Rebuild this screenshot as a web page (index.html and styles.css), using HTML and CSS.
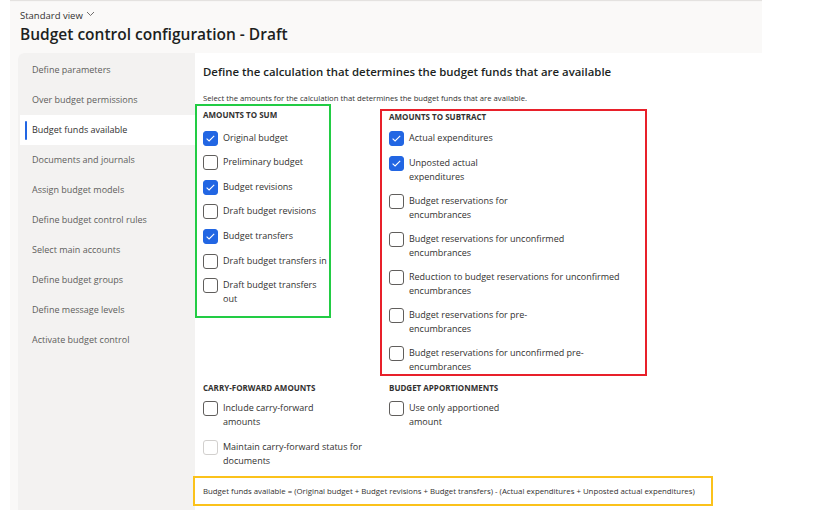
FILE: index.html
```html
<!DOCTYPE html>
<html lang="en">
<head>
    <meta charset="UTF-8">
    <title>Budget control configuration</title>
    <link rel="stylesheet" href="styles.css">
</head>
<body>
<div class="app">
    <div class="header">
        <div class="view-picker">Standard view
            <svg class="chev" width="9" height="6" viewBox="0 0 9 6"><path d="M1 1 L4.5 4.5 L8 1" fill="none" stroke="#605e5c" stroke-width="0.9"/></svg>
        </div>
        <h1 class="page-title">Budget control configuration - Draft</h1>
    </div>

    <div class="card">
        <ul class="nav">
            <li>Define parameters</li>
            <li>Over budget permissions</li>
            <li class="active">Budget funds available</li>
            <li>Documents and journals</li>
            <li>Assign budget models</li>
            <li>Define budget control rules</li>
            <li>Select main accounts</li>
            <li>Define budget groups</li>
            <li>Define message levels</li>
            <li>Activate budget control</li>
        </ul>

        <div class="content">
            <h2 class="content-title">Define the calculation that determines the budget funds that are available</h2>
            <p class="hint">Select the amounts for the calculation that determines the budget funds that are available.</p>

            <div class="groups">
                <div class="group group-sum">
                    <div class="group-title">AMOUNTS TO SUM</div>
                    <div class="check"><span class="box on"></span><span class="label">Original budget</span></div>
                    <div class="check"><span class="box"></span><span class="label">Preliminary budget</span></div>
                    <div class="check"><span class="box on"></span><span class="label">Budget revisions</span></div>
                    <div class="check"><span class="box"></span><span class="label">Draft budget revisions</span></div>
                    <div class="check"><span class="box on"></span><span class="label">Budget transfers</span></div>
                    <div class="check"><span class="box"></span><span class="label">Draft budget transfers in</span></div>
                    <div class="check"><span class="box"></span><span class="label">Draft budget transfers<br>out</span></div>
                </div>

                <div class="group group-sub">
                    <div class="group-title">AMOUNTS TO SUBTRACT</div>
                    <div class="check"><span class="box on"></span><span class="label">Actual expenditures</span></div>
                    <div class="check"><span class="box on"></span><span class="label">Unposted actual<br>expenditures</span></div>
                    <div class="check"><span class="box"></span><span class="label">Budget reservations for<br>encumbrances</span></div>
                    <div class="check"><span class="box"></span><span class="label">Budget reservations for unconfirmed<br>encumbrances</span></div>
                    <div class="check"><span class="box"></span><span class="label">Reduction to budget reservations for unconfirmed<br>encumbrances</span></div>
                    <div class="check"><span class="box"></span><span class="label">Budget reservations for pre-<br>encumbrances</span></div>
                    <div class="check"><span class="box"></span><span class="label">Budget reservations for unconfirmed pre-<br>encumbrances</span></div>
                </div>
            </div>

            <div class="extras">
                <div class="extra extra-carry">
                    <div class="group-title">CARRY-FORWARD AMOUNTS</div>
                    <div class="check"><span class="box"></span><span class="label">Include carry-forward<br>amounts</span></div>
                    <div class="check"><span class="box disabled"></span><span class="label">Maintain carry-forward status for<br>documents</span></div>
                </div>
                <div class="extra">
                    <div class="group-title">BUDGET APPORTIONMENTS</div>
                    <div class="check"><span class="box"></span><span class="label">Use only apportioned<br>amount</span></div>
                </div>
            </div>

            <div class="formula">Budget funds available = (Original budget + Budget revisions + Budget transfers) - (Actual expenditures + Unposted actual expenditures)</div>
        </div>
    </div>
</div>
</body>
</html>
```

FILE: styles.css
```css
html, body {
    margin: 0;
    padding: 0;
    background-color: white;
    font-family: 'Open Sans', 'Noto Sans', sans-serif;
    color: #323130;
}

.app {
    margin-left: 10px;
    width: 752px;
    height: 510px;
    background-color: #faf9f8;
    box-shadow: inset 0 2px 1px -1px #e1dfdd;
    overflow: hidden;
}

.header {
    padding: 9px 0 0 10px;
    height: 44px;
}

.view-picker {
    font-size: 9.5px;
    line-height: 13px;
    color: #323130;
}

.chev {
    margin-left: 1px;
    vertical-align: 2px;
}

.page-title {
    margin: 1px 0 0;
    font-size: 15.5px;
    line-height: 22px;
    font-weight: 600;
    color: #201f1e;
}

.card {
    display: flex;
    margin-left: 8px;
    height: 457px;
    border-top-left-radius: 6px;
    overflow: hidden;
    background-color: white;
}

.nav {
    list-style: none;
    margin: 0;
    padding: 2px 0 0 2px;
    width: 175px;
    background-color: #f3f2f1;
}

.nav li {
    height: 30px;
    line-height: 30px;
    padding-left: 12px;
    font-size: 9px;
    color: #605e5c;
    position: relative;
}

.nav li.active {
    background-color: white;
    color: #323130;
}

.nav li.active::before {
    content: '';
    position: absolute;
    left: 5px;
    top: 6px;
    width: 2px;
    height: 19px;
    background-color: #2266e3;
    border-radius: 1px;
}

.content {
    flex: 1;
    padding: 10px 0 0 8px;
}

.content-title {
    margin: 0;
    font-size: 11.4px;
    line-height: 18px;
    font-weight: 600;
    color: #201f1e;
}

.hint {
    margin: 12px 0 0;
    font-size: 7.7px;
    line-height: 11px;
    color: #323130;
}

.groups {
    display: flex;
    align-items: flex-start;
    margin-left: -8px;
}

.group {
    box-sizing: border-box;
    border: 2px solid;
}

.group-sum {
    width: 136px;
    padding: 3px 0 10px 6px;
    border-color: #22cc44;
}

.group-sub {
    width: 267px;
    margin-top: 5px;
    margin-left: 49px;
    padding: 0 0 0 7px;
    border-color: #e8202a;
}

.group-title {
    font-size: 8px;
    line-height: 12px;
    font-weight: 700;
    color: #323130;
}

.check {
    display: flex;
    align-items: flex-start;
    margin-top: 10px;
}

.group-sum .check {
    margin-top: 9.6px;
}

.group-sub .check:nth-child(2) {
    margin-top: 8px;
}

.box {
    box-sizing: border-box;
    flex: none;
    width: 15px;
    height: 15px;
    border: 1px solid #605e5c;
    border-radius: 3px;
    background-color: white;
    margin-right: 5px;
}

.box.on {
    border-color: #2266e3;
    background-color: #2266e3;
    background-image: url("data:image/svg+xml,%3Csvg xmlns='http://www.w3.org/2000/svg' width='15' height='15' viewBox='0 0 15 15'%3E%3Cpath d='M3.6 7.6 L6.1 10 L11.2 4.9' fill='none' stroke='white' stroke-width='1.1'/%3E%3C/svg%3E");
    background-position: center;
}

.box.disabled {
    border-color: #d2d0ce;
}

.label {
    font-size: 9px;
    line-height: 14px;
    color: #323130;
}

.extras {
    display: flex;
    margin-top: 6px;
}

.extra-carry {
    width: 186px;
}

.extras .check {
    margin-top: 11px;
}

.extras .check:nth-child(2) {
    margin-top: 7px;
}

.formula {
    box-sizing: border-box;
    width: 520px;
    height: 30px;
    margin: 8px 0 0 -10px;
    padding-left: 8px;
    border: 2px solid #fbc21b;
    font-size: 7.8px;
    line-height: 26px;
    color: #323130;
}
```
